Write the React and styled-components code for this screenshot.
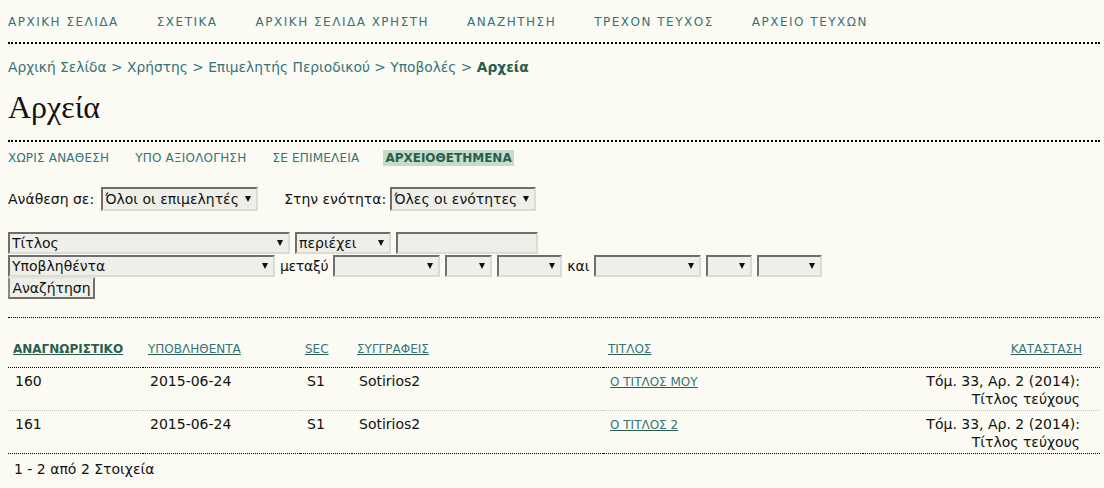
import React from 'react'
import styled, { createGlobalStyle } from 'styled-components'

const GlobalStyle = createGlobalStyle`
  html, body {
    margin: 0;
    padding: 0;
    background: #fbfbf3;
  }
  body {
    font-family: "DejaVu Sans", Verdana, sans-serif;
    font-size: 14px;
    color: #111;
  }
`

const LINK = '#33737a'
const CURRENT = '#2a5e4c'

// strip accents for the uppercase menus (Greek caps drop the tonos)
const caps = (s) => s.toUpperCase().normalize('NFD').replace(/[\u0300-\u036f]/g, '')

// Layout
const Page = styled.div`
  padding: 0 4px 0 8px;
  min-height: 488px;
  box-sizing: border-box;
`

const NavBar = styled.nav`
  display: flex;
  gap: 38px;
  padding: 14px 0 12px;
  border-bottom: 2px dotted #000;
`

const NavLink = styled.a`
  font-size: 12px;
  line-height: 16px;
  letter-spacing: 1.5px;
  color: ${LINK};
  text-decoration: none;
`

const Breadcrumb = styled.div`
  margin-top: 15px;
  font-size: 13.8px;
  line-height: 16px;
  color: ${LINK};

  b {
    color: ${CURRENT};
  }
`

const Heading = styled.h1`
  margin: 13px 0 0;
  padding-bottom: 14px;
  font-family: "Liberation Serif", "Times New Roman", serif;
  font-weight: normal;
  font-size: 32px;
  line-height: 38px;
  color: #111;
  border-bottom: 2px dotted #000;
`

const Tabs = styled.ul`
  display: flex;
  gap: 26px;
  list-style: none;
  margin: 8px 0 0;
  padding: 0;
`

const Tab = styled.li`
  font-size: 12px;
  line-height: 16px;
  letter-spacing: ${({ $active }) => ($active ? '0' : '0.2px')};
  color: ${({ $active }) => ($active ? CURRENT : LINK)};
  font-weight: ${({ $active }) => ($active ? 'bold' : 'normal')};
  background: ${({ $active }) => ($active ? '#c4dccc' : 'transparent')};
  padding: 0 ${({ $active }) => ($active ? '2px' : '0')};
  margin-left: ${({ $active }) => ($active ? '-2px' : '0')};
`

const FilterRow = styled.div`
  display: flex;
  align-items: center;
  margin-top: 21px;
  height: 24px;
`

const Label = styled.span`
  font-size: 14px;
  line-height: 16px;
  letter-spacing: ${({ $tight }) => ($tight ? '-0.3px' : '0')};
  margin-right: ${({ $mr }) => $mr || 0}px;
  margin-left: ${({ $ml }) => $ml || 0}px;
`

const SearchForm = styled.form`
  display: flex;
  flex-direction: column;
  align-items: flex-start;
  margin-top: 21px;
`

const SearchRow = styled.div`
  display: flex;
  align-items: center;
  gap: 5px;
  height: 22px;
  margin-bottom: ${({ $mb }) => $mb || 0}px;
`

const SelectBox = styled.div`
  display: inline-flex;
  align-items: center;
  justify-content: space-between;
  box-sizing: border-box;
  width: ${({ $w }) => $w}px;
  height: ${({ $h }) => $h || 22}px;
  padding: 0 5px 0 2px;
  background: #efefe9;
  border-style: solid;
  border-width: 2px;
  border-color: #6e6e6e #dcdcd6 #dcdcd6 #6e6e6e;
  font-size: 14px;
  color: #111;
  white-space: nowrap;
  overflow: hidden;
`

const Arrow = styled.span`
  flex: none;
  width: 0;
  height: 0;
  border-left: 3.5px solid transparent;
  border-right: 3.5px solid transparent;
  border-top: 6px solid #111;
`

const TextInput = styled.div`
  box-sizing: border-box;
  width: ${({ $w }) => $w}px;
  height: 22px;
  background: #efefe9;
  border-style: solid;
  border-width: 2px;
  border-color: #6e6e6e #dcdcd6 #dcdcd6 #6e6e6e;
`

const Button = styled.button`
  box-sizing: border-box;
  width: 87px;
  height: 22px;
  padding: 0;
  font-family: inherit;
  font-size: 14px;
  color: #111;
  background: #efefe9;
  border-style: solid;
  border-width: 2px;
  border-color: #e6e6e0 #6e6e6e #6e6e6e #8a8a8a;
`

const Divider = styled.div`
  margin-top: 18px;
  border-bottom: 1px dotted #000;
`

const Table = styled.table`
  width: 100%;
  table-layout: fixed;
  margin-top: 19px;
  border-collapse: collapse;
`

const Th = styled.th`
  box-sizing: border-box;
  width: ${({ $w }) => ($w ? `${$w}px` : 'auto')};
  padding: 4px ${({ $right }) => ($right ? '18px' : '5px')} 10px 5px;
  text-align: ${({ $right }) => ($right ? 'right' : 'left')};
  font-weight: normal;
  font-size: 12px;
  line-height: 16px;
  border-bottom: 1px dotted #000;
`

const SortLink = styled.a`
  color: ${({ $active }) => ($active ? CURRENT : LINK)};
  font-weight: ${({ $active }) => ($active ? 'bold' : 'normal')};
  text-decoration: underline;
  text-decoration-color: ${CURRENT};
`

const Tr = styled.tr`
  border-bottom: 1px dotted ${({ $last }) => ($last ? '#000' : '#c8c8c0')};
`

const Td = styled.td`
  vertical-align: top;
  padding: 4px ${({ $right }) => ($right ? '20px' : '6px')} 2px 7px;
  text-align: ${({ $right }) => ($right ? 'right' : 'left')};
  font-size: 14px;
  line-height: 18px;
`

const TitleLink = styled.a`
  font-size: 12px;
  color: ${LINK};
  text-decoration: underline;
  text-decoration-color: ${CURRENT};
`

const Footer = styled.div`
  margin-top: 7px;
  padding-left: 6px;
  font-size: 14px;
  line-height: 16px;
`

const Select = ({ w, h, children }) => (
  <SelectBox $w={w} $h={h}>
    <span>{children}</span>
    <Arrow />
  </SelectBox>
)

const navItems = [
  'Αρχική Σελίδα',
  'Σχετικά',
  'Αρχική Σελίδα Χρήστη',
  'Αναζήτηση',
  'Τρέχον Τεύχος',
  'Αρχείο Τευχών',
]

const tabs = [
  ['Χωρίς Ανάθεση', false],
  ['Υπό Αξιολόγηση', false],
  ['Σε Επιμέλεια', false],
  ['Αρχειοθετημένα', true],
]

const rows = [
  { id: '160', date: '2015-06-24', sec: 'S1', author: 'Sotirios2', title: 'Ο ΤΙΤΛΟΣ ΜΟΥ' },
  { id: '161', date: '2015-06-24', sec: 'S1', author: 'Sotirios2', title: 'Ο ΤΙΤΛΟΣ 2' },
]

const App = () => (
  <>
    <GlobalStyle />
    <Page>
      <NavBar>
        {navItems.map((item) => (
          <NavLink key={item}>{caps(item)}</NavLink>
        ))}
      </NavBar>

      <Breadcrumb>
        Αρχική Σελίδα &gt; Χρήστης &gt; Επιμελητής Περιοδικού &gt; Υποβολές &gt; <b>Αρχεία</b>
      </Breadcrumb>

      <Heading>Αρχεία</Heading>

      <Tabs>
        {tabs.map(([label, active]) => (
          <Tab key={label} $active={active}>
            {caps(label)}
          </Tab>
        ))}
      </Tabs>

      <FilterRow>
        <Label $mr={7}>Ανάθεση σε:</Label>
        <Select w={157} h={24}>Όλοι οι επιμελητές</Select>
        <Label $ml={26} $mr={4}>Στην ενότητα:</Label>
        <Select w={146} h={24}>Όλες οι ενότητες</Select>
      </FilterRow>

      <SearchForm>
        <SearchRow $mb={1}>
          <Select w={282}>Τίτλος</Select>
          <Select w={96}>περιέχει</Select>
          <TextInput $w={142} />
        </SearchRow>
        <SearchRow>
          <Select w={267}>Υποβληθέντα</Select>
          <Label $tight>μεταξύ</Label>
          <Select w={107} />
          <Select w={47} />
          <Select w={65} />
          <Label>και</Label>
          <Select w={107} />
          <Select w={46} />
          <Select w={65} />
        </SearchRow>
        <Button type="button">Αναζήτηση</Button>
      </SearchForm>

      <Divider />

      <Table>
        <thead>
          <tr>
            <Th $w={135}><SortLink $active>ΑΝΑΓΝΩΡΙΣΤΙΚΟ</SortLink></Th>
            <Th $w={157}><SortLink>ΥΠΟΒΛΗΘΕΝΤΑ</SortLink></Th>
            <Th $w={52}><SortLink>SEC</SortLink></Th>
            <Th $w={251}><SortLink>ΣΥΓΓΡΑΦΕΙΣ</SortLink></Th>
            <Th $w={260}><SortLink>ΤΙΤΛΟΣ</SortLink></Th>
            <Th $right><SortLink>ΚΑΤΑΣΤΑΣΗ</SortLink></Th>
          </tr>
        </thead>
        <tbody>
          {rows.map((r, i) => (
            <Tr key={r.id} $last={i === rows.length - 1}>
              <Td>{r.id}</Td>
              <Td>{r.date}</Td>
              <Td>{r.sec}</Td>
              <Td>{r.author}</Td>
              <Td><TitleLink>{r.title}</TitleLink></Td>
              <Td $right>
                Τόμ. 33, Αρ. 2 (2014):
                <br />
                Τίτλος τεύχους
              </Td>
            </Tr>
          ))}
        </tbody>
      </Table>

      <Footer>1 - 2 από 2 Στοιχεία</Footer>
    </Page>
  </>
)

export default App
